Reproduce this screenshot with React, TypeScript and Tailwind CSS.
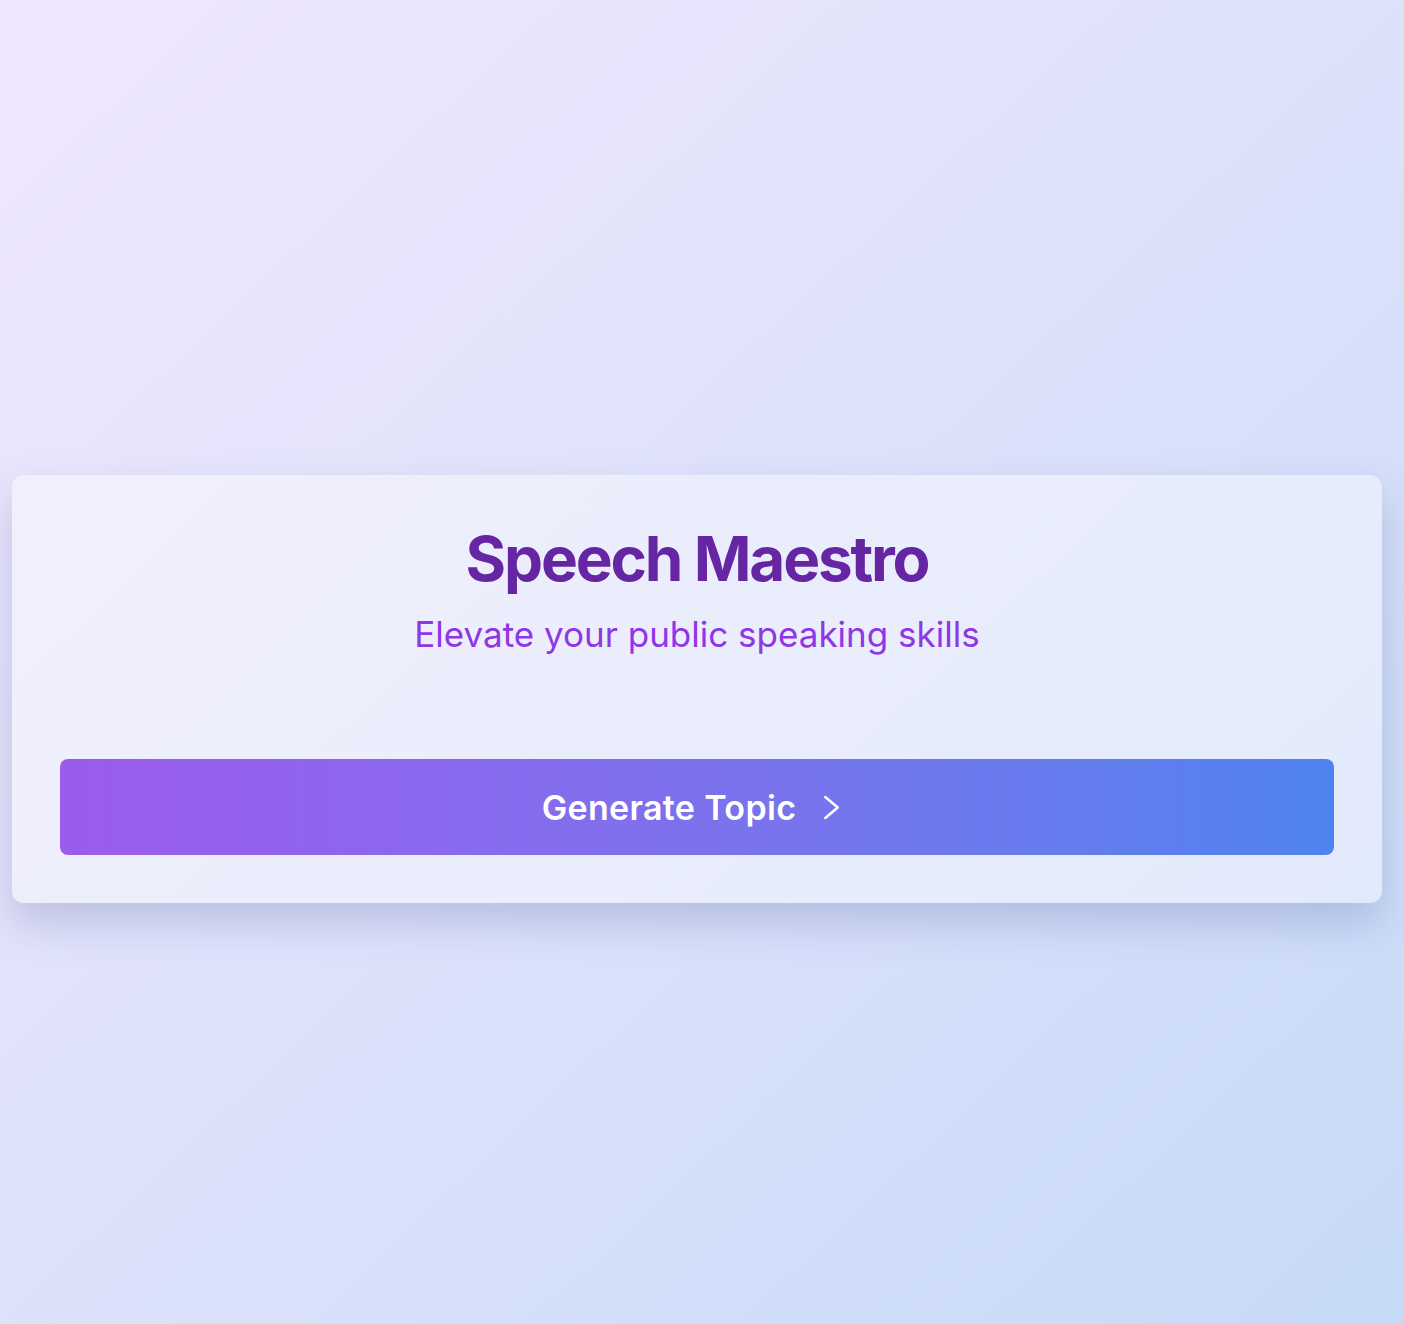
function Chevron() {
  return (
    <svg viewBox="0 0 40 40" className="ml-4 w-10 h-10" fill="none" stroke="currentColor" strokeWidth={2.5} strokeLinecap="round" strokeLinejoin="round">
      <path d="M13.25 10 L25.75 20.5 L13.25 31" />
    </svg>
  )
}

export default function App() {
  return (
    <div
      className="min-h-screen flex items-center pl-3 pr-[22px] pt-[54px] bg-gradient-to-br from-[#f0e7fd] via-[#dde2fb] to-[#c6daf8]"
      style={{ fontFamily: 'Inter, "Noto Sans", sans-serif' }}
    >
      <div className="w-full rounded-xl bg-white/40 px-12 pt-[53px] pb-12 shadow-[0_20px_40px_rgba(80,90,150,0.25)]">
        <div className="text-center">
          <h1 className="text-[62px] leading-none font-bold tracking-[-0.035em] text-[#6625a3]">Speech Maestro</h1>
          <p className="mt-[23px] text-[35px] leading-[42px] text-[#8f36e6]">Elevate your public speaking skills</p>
        </div>

        <button className="mt-[104px] w-full h-24 flex items-center justify-center rounded-lg bg-gradient-to-r from-[#9b5bed] to-[#4f83ee] text-white">
          <span className="text-[34px] font-semibold tracking-[0.01em]">Generate Topic</span>
          <Chevron />
        </button>
      </div>
    </div>
  )
}
